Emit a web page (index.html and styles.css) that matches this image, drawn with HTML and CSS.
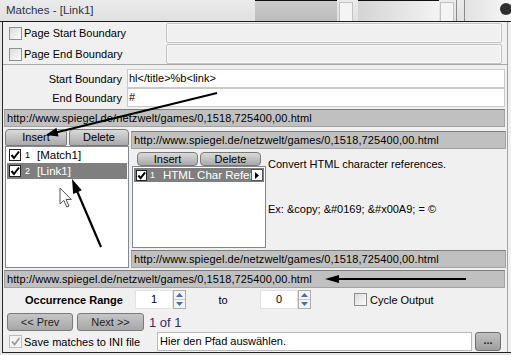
FILE: index.html
```html
<!DOCTYPE html>
<html lang="de">
<head>
    <meta charset="UTF-8">
    <title>Matches - [Link1]</title>
    <link rel="stylesheet" href="styles.css">
</head>
<body>
<div class="window">
    <div class="titlebar">
        <div class="title">Matches - [Link1]</div>
        <div class="tb-grey"></div>
        <div class="tb-box"></div>
        <div class="tb-fade"></div>
        <div class="tb-box tb-box-small"></div>
        <div class="tb-sep"></div>
        <div class="tb-end"><span class="tb-dot"></span></div>
    </div>

    <div class="client">
        <div class="panel">
            <div class="top-group">
                <div class="opt-row">
                    <span class="chk"></span>
                    <span class="opt-label">Page Start Boundary</span>
                    <span class="box box-disabled"></span>
                </div>
                <div class="opt-row">
                    <span class="chk"></span>
                    <span class="opt-label">Page End Boundary</span>
                    <span class="box box-disabled"></span>
                </div>
            </div>

            <div class="field-row">
                <span class="field-label">Start Boundary</span>
                <span class="box box-field">hl&lt;/title&gt;%b&lt;link&gt;</span>
            </div>
            <div class="field-row">
                <span class="field-label">End Boundary</span>
                <span class="box box-field">#</span>
            </div>

            <div class="urlbar urlbar-full">http://www.spiegel.de/netzwelt/games/0,1518,725400,00.html</div>

            <div class="split">
                <div class="left-pane">
                    <div class="tabs">
                        <span class="tab tab-insert">Insert</span>
                        <span class="tab tab-delete">Delete</span>
                    </div>
                    <div class="list">
                        <div class="item">
                            <span class="lchk"><svg width="10" height="10" viewBox="0 0 10 10"><path d="M1.5 5 L4 8 L9 1.5" fill="none" stroke="#000" stroke-width="2"/></svg></span>
                            <span class="num">1</span>
                            <span class="item-text">[Match1]</span>
                        </div>
                        <div class="item selected">
                            <span class="lchk"><svg width="10" height="10" viewBox="0 0 10 10"><path d="M1.5 5 L4 8 L9 1.5" fill="none" stroke="#000" stroke-width="2"/></svg></span>
                            <span class="num">2</span>
                            <span class="item-text">[Link1]</span>
                        </div>
                    </div>
                </div>

                <div class="right-pane">
                    <div class="urlbar">http://www.spiegel.de/netzwelt/games/0,1518,725400,00.html</div>
                    <div class="inner">
                        <div class="inner-left">
                            <div class="tabs tabs-small">
                                <span class="tab">Insert</span>
                                <span class="tab">Delete</span>
                            </div>
                            <div class="list list-small">
                                <div class="item selected">
                                    <span class="lchk"><svg width="9" height="9" viewBox="0 0 10 10"><path d="M1.5 5 L4 8 L9 1.5" fill="none" stroke="#000" stroke-width="2.2"/></svg></span>
                                    <span class="num">1</span>
                                    <span class="item-text">HTML Char Refere</span>
                                    <span class="more"><svg width="6" height="7" viewBox="0 0 6 7"><path d="M1 0 L5 3.5 L1 7 Z" fill="#000"/></svg></span>
                                </div>
                            </div>
                        </div>
                        <div class="desc">
                            <p>Convert HTML character references.</p>
                            <p class="example">Ex: &amp;copy; &amp;#0169; &amp;#x00A9; = ©</p>
                        </div>
                    </div>
                    <div class="urlbar">http://www.spiegel.de/netzwelt/games/0,1518,725400,00.html</div>
                </div>
            </div>

            <div class="urlbar urlbar-full">http://www.spiegel.de/netzwelt/games/0,1518,725400,00.html</div>

            <div class="range-row">
                <span class="range-label">Occurrence Range</span>
                <span class="spin">
                    <span class="spin-value">1</span>
                    <span class="spin-btns">
                        <span class="spin-btn"><svg width="7" height="4" viewBox="0 0 7 4"><path d="M0 4 L3.5 0 L7 4 Z" fill="#4d6f9e"/></svg></span>
                        <span class="spin-btn"><svg width="7" height="4" viewBox="0 0 7 4"><path d="M0 0 L3.5 4 L7 0 Z" fill="#4d6f9e"/></svg></span>
                    </span>
                </span>
                <span class="to">to</span>
                <span class="spin">
                    <span class="spin-value">0</span>
                    <span class="spin-btns">
                        <span class="spin-btn"><svg width="7" height="4" viewBox="0 0 7 4"><path d="M0 4 L3.5 0 L7 4 Z" fill="#4d6f9e"/></svg></span>
                        <span class="spin-btn"><svg width="7" height="4" viewBox="0 0 7 4"><path d="M0 0 L3.5 4 L7 0 Z" fill="#4d6f9e"/></svg></span>
                    </span>
                </span>
                <span class="cycle">
                    <span class="chk"></span>
                    <span class="opt-label">Cycle Output</span>
                </span>
            </div>

            <div class="nav-row">
                <span class="btn btn-prev">&lt;&lt; Prev</span>
                <span class="btn btn-next">Next &gt;&gt;</span>
                <span class="pager">1 of 1</span>
            </div>

            <div class="save-row">
                <span class="chk chk-disabled"><svg width="11" height="11" viewBox="0 0 11 11"><path d="M2 5.5 L4.5 8.5 L9.5 2" fill="none" stroke="#9a9a9a" stroke-width="1.8"/></svg></span>
                <span class="save-label">Save matches to INI file</span>
                <span class="box path">Hier den Pfad auswählen.</span>
                <span class="browse">...</span>
            </div>
        </div>
    </div>

    <!-- Annotation arrows and mouse pointer drawn over the dialog -->
    <svg class="annot" width="511" height="355" viewBox="0 0 511 355">
        <line x1="217" y1="93" x2="56" y2="132.5" stroke="#000" stroke-width="2"/>
        <polygon points="46,135 58.6,136.5 56.4,127.8" fill="#000"/>
        <line x1="101" y1="247" x2="77" y2="191" stroke="#000" stroke-width="2.2"/>
        <polygon points="72,179 81.8,190.3 73.2,193.9" fill="#000"/>
        <line x1="466" y1="279" x2="337" y2="279" stroke="#000" stroke-width="2"/>
        <polygon points="325,279 339,275 339,283" fill="#000"/>
        <path d="M60 188 L60 204 L63.8 200.3 L66.8 207 L69 206 L66 199.5 L71.3 199.5 Z" fill="#fff" stroke="#555" stroke-width="1"/>
    </svg>
</div>
</body>
</html>
```

FILE: styles.css
```css
* {
    box-sizing: border-box;
}
body {
    margin: 0;
    background: #e6e6e6;
    font-family: "Liberation Sans", Arial, sans-serif;
    font-size: 11px;
    color: #000;
}
p {
    margin: 0;
}
.window {
    position: relative;
    width: 511px;
    height: 355px;
    overflow: hidden;
    display: flex;
    flex-direction: column;
}

/* title bar */
.titlebar {
    flex: none;
    height: 22px;
    display: flex;
    border-bottom: 1px solid #1b1b1b;
    background: linear-gradient(#ebebeb, #e0e0e0);
}
.title {
    width: 255px;
    padding-left: 6px;
    line-height: 21px;
    font-size: 11.5px;
    color: #28344e;
}
.tb-grey {
    width: 82px;
    border-top: 1px solid #111;
    background: linear-gradient(#cbcbcb, #bcbcbc);
}
.tb-box {
    width: 14px;
    margin-left: 2px;
    margin-top: 2px;
    border: 1px solid #c2c2c2;
    border-bottom: none;
    background: #f4f4f4;
}
.tb-fade {
    width: 81px;
    margin-left: 5px;
    border-top: 1px solid #111;
    background: linear-gradient(to right, #d4d4d4, #f3f3f3);
}
.tb-box-small {
    margin-left: 1px;
}
.tb-sep {
    width: 9px;
    margin-left: 2px;
    border-left: 1px solid #8a8a8a;
    border-right: 1px solid #8a8a8a;
}
.tb-end {
    flex: 1;
    display: flex;
    justify-content: flex-end;
    background: linear-gradient(to right, #e2e2e2, #f6f6f6);
}
.tb-dot {
    width: 12px;
    height: 12px;
    margin-top: 3px;
    margin-right: -1px;
    border-radius: 50%;
    background: #2e2e2e;
}

/* dialog body */
.client {
    flex: none;
    height: 331px;
    margin-left: 2px;
    border-left: 1px solid #262626;
    border-bottom: 1px solid #262626;
    background: #f0f0f0;
    overflow: hidden;
}
.panel {
    width: 505px;
    height: 100%;
    border-right: 1px solid #a3a3a3;
}
.top-group {
    padding-top: 1px;
    border-bottom: 1px solid #a8a8a8;
}
.opt-row {
    display: flex;
    align-items: center;
    height: 20px;
    padding-left: 6px;
}
.opt-row + .opt-row {
    margin-top: 1px;
}
.chk {
    flex: none;
    width: 13px;
    height: 13px;
    border: 1px solid #8e8f8f;
    background: linear-gradient(135deg, #dcdcdc, #fbfbfb);
    display: flex;
    align-items: center;
    justify-content: center;
}
.chk-disabled {
    border-color: #bcbcbc;
    background: #f4f4f4;
}
.opt-label {
    margin-left: 2px;
}
.box {
    display: block;
    background: #fff;
    border: 1px solid #abadb3;
    white-space: nowrap;
    overflow: hidden;
}
.box-disabled {
    margin-left: auto;
    margin-right: 5px;
    width: 336px;
    height: 20px;
    background: #f0f0f0;
    border-color: #c3c3c3;
    border-radius: 2px;
    box-shadow: inset 0 0 0 1px #f7f7f7;
}
.field-row {
    display: flex;
    align-items: center;
    height: 19px;
}
.top-group + .field-row {
    margin-top: 4px;
}
.field-label {
    width: 119px;
    text-align: right;
}
.box-field {
    margin-left: 5px;
    width: 378px;
    height: 19px;
    padding-left: 1px;
    line-height: 17px;
    border-color: #c9c9c9;
}

/* grey url lines */
.urlbar {
    height: 18px;
    padding-left: 2px;
    line-height: 16px;
    background: #c0c0c0;
    border: 1px solid #a2a2a2;
    border-top-color: #7e7e7e;
    white-space: nowrap;
    overflow: hidden;
    letter-spacing: 0.1px;
}
.urlbar-full {
    width: 501px;
    margin-left: 1px;
    margin-top: 2px;
}

/* match lists */
.split {
    display: flex;
    height: 141px;
}
.left-pane {
    width: 124px;
    margin-left: 2px;
    display: flex;
    flex-direction: column;
}
.tabs {
    flex: none;
    display: flex;
    gap: 2px;
    height: 17px;
    margin-top: 2px;
}
.tab {
    display: block;
    text-align: center;
    line-height: 15px;
    background: linear-gradient(#dadada, #a9a9a9);
    border: 1px solid #7b7b7b;
    border-radius: 4px 4px 2px 2px;
}
.tab-insert {
    width: 62px;
}
.tab-delete {
    width: 60px;
}
.list {
    flex: 1;
    background: #fff;
    border: 1px solid #828790;
    padding: 0 1px;
}
.item {
    display: flex;
    align-items: center;
    height: 16px;
    padding-left: 2px;
}
.item.selected {
    background: #7f7f7f;
    color: #fff;
}
.lchk {
    flex: none;
    width: 12px;
    height: 12px;
    border: 1px solid #222;
    background: #fff;
    display: flex;
    align-items: center;
    justify-content: center;
}
.num {
    width: 8px;
    margin-left: 4px;
    font-size: 9px;
}
.item-text {
    margin-left: 4px;
    font-size: 11.5px;
}
.right-pane {
    width: 375px;
    margin-left: 2px;
}
.right-pane > .urlbar:first-child {
    margin-top: 4px;
}
.inner {
    display: flex;
    height: 101px;
}
.inner-left {
    width: 134px;
    margin-left: 1px;
    display: flex;
    flex-direction: column;
}
.tabs-small {
    height: 14px;
    margin-top: 3px;
    padding-left: 5px;
}
.tabs-small .tab {
    width: 61px;
    line-height: 12px;
    border-radius: 4px;
}
.list-small {
    flex: none;
    height: 82px;
    padding: 1px;
}
.list-small .item {
    height: 14px;
    padding-right: 1px;
}
.list-small .lchk {
    width: 11px;
    height: 11px;
}
.list-small .num {
    margin-left: 3px;
}
.list-small .item-text {
    flex: 1;
    min-width: 0;
    white-space: nowrap;
    margin-left: 5px;
}
.more {
    flex: none;
    width: 12px;
    height: 12px;
    background: #fff;
    border: 1px solid #555;
    display: flex;
    align-items: center;
    justify-content: center;
}
.desc {
    margin-left: 2px;
    padding-top: 9px;
}
.example {
    margin-top: 33px;
}

/* bottom controls */
.range-row {
    display: flex;
    align-items: center;
    height: 19px;
    margin-top: 2px;
}
.range-label {
    width: 132px;
    padding-left: 22px;
    font-weight: bold;
}
.spin {
    display: flex;
    height: 19px;
}
.spin-value {
    width: 38px;
    text-align: center;
    line-height: 17px;
    background: #fff;
    border: 1px solid #e2e2e2;
}
.spin-btns {
    width: 13px;
    display: flex;
    flex-direction: column;
    border: 1px solid #adadad;
    background: #f3f3f3;
}
.spin-btn {
    flex: 1;
    display: flex;
    align-items: center;
    justify-content: center;
}
.spin-btn + .spin-btn {
    border-top: 1px solid #c8c8c8;
}
.to {
    width: 74px;
    text-align: center;
}
.cycle {
    display: flex;
    align-items: center;
    margin-left: 43px;
}
.cycle .opt-label {
    margin-left: 3px;
}
.nav-row {
    display: flex;
    align-items: center;
    gap: 4px;
    height: 18px;
    margin-top: 4px;
    padding-left: 4px;
}
.btn {
    height: 18px;
    line-height: 16px;
    text-align: center;
    color: #1f1f1f;
    background: linear-gradient(#c6c6c6, #a7a7a7);
    border: 1px solid #7b7b7b;
    border-radius: 3px;
}
.btn-prev {
    width: 66px;
}
.btn-next {
    width: 67px;
}
.pager {
    margin-left: 1px;
    font-size: 13px;
    color: #3a2768;
}
.save-row {
    display: flex;
    align-items: center;
    height: 19px;
    margin-top: 1px;
    padding-left: 6px;
}
.save-label {
    width: 133px;
    margin-left: 2px;
}
.path {
    width: 315px;
    height: 19px;
    padding-left: 2px;
    line-height: 17px;
    border-color: #b9b9b9;
}
.browse {
    width: 26px;
    height: 19px;
    margin-left: 3px;
    text-align: center;
    line-height: 15px;
    font-weight: bold;
    color: #222;
    background: linear-gradient(#c2c2c2, #9d9d9d);
    border: 1px solid #6f6f6f;
    border-radius: 3px;
}

.annot {
    position: absolute;
    left: 0;
    top: 0;
    pointer-events: none;
}
```
